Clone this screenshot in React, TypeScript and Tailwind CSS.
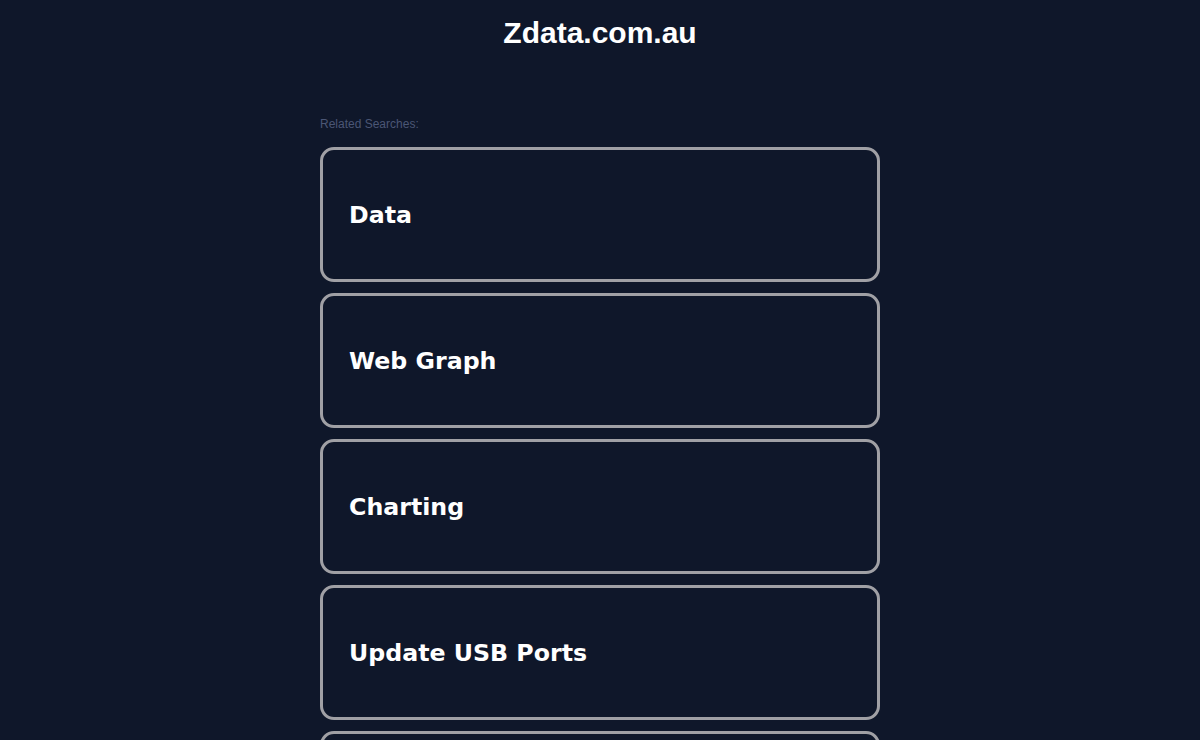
export default function App() {
  const items = ["Data", "Web Graph", "Charting", "Update USB Ports", "Data Analysis"];
  return (
    <div className="min-h-screen bg-[#0f172a]">
      <div className="pt-[15px] text-center font-['Liberation_Sans',Arial,sans-serif] text-[30px] font-bold leading-[36px] text-white">
        Zdata.com.au
      </div>
      <div className="mx-auto w-[560px] pt-[66px]">
        <div className="mb-[16px] font-['Liberation_Sans',Arial,sans-serif] text-[12px] leading-[14px] text-[#4b5675]">
          Related Searches:
        </div>
        <div className="flex flex-col gap-[11px]">
          {items.map((t) => (
            <div key={t} className="flex h-[135px] items-center rounded-[14px] border-[3px] border-[#a0a0a5] pl-[26px] pt-[2px]">
              <span className="font-['DejaVu_Sans',sans-serif] text-[23.7px] font-bold text-white">{t}</span>
            </div>
          ))}
        </div>
      </div>
    </div>
  );
}
